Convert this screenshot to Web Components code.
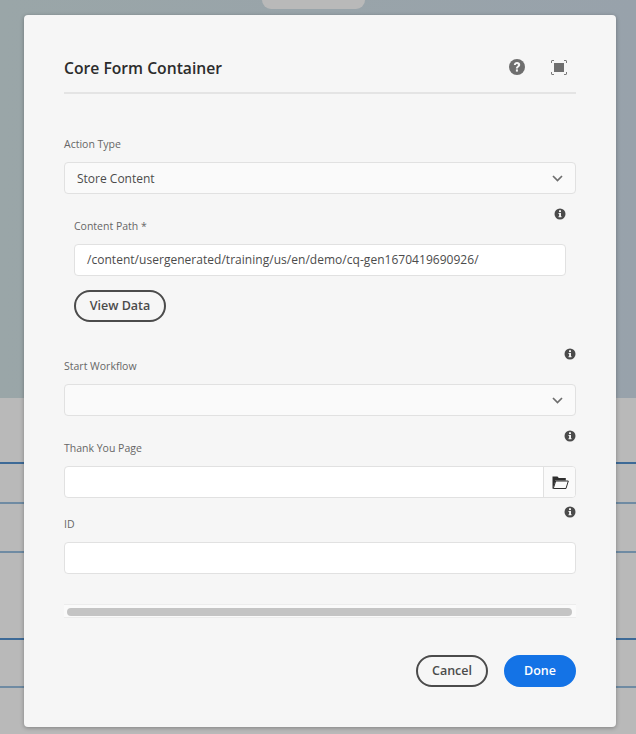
<!DOCTYPE html>
<html>
<head>
<meta charset="utf-8">
<title>Core Form Container</title>
<style>
html, body { margin: 0; padding: 0; }
body { width: 636px; height: 734px; overflow: hidden; font-family: "Open Sans", "Liberation Sans", sans-serif; }
</style>
</head>
<body>
<page-backdrop>
  <form-dialog heading="Core Form Container">
    <form-field label="Action Type">
      <select-box value="Store Content"></select-box>
    </form-field>
    <div style="padding:0 10px;margin-top:14px">
      <form-field label="Content Path *" info>
        <text-box value="/content/usergenerated/training/us/en/demo/cq-gen1670419690926/"></text-box>
      </form-field>
      <pill-button style="margin-top:14px;width:92px">View Data</pill-button>
    </div>
    <form-field label="Start Workflow" info style="margin-top:26px">
      <select-box></select-box>
    </form-field>
    <form-field label="Thank You Page" info style="margin-top:14px">
      <text-box browse></text-box>
    </form-field>
    <form-field label="ID" info style="margin-top:8px">
      <text-box></text-box>
    </form-field>
    <scroll-strip style="margin-top:30px"></scroll-strip>
    <pill-button slot="footer" style="width:72px">Cancel</pill-button>
    <pill-button slot="footer" primary style="width:72px">Done</pill-button>
  </form-dialog>
</page-backdrop>

<script>
class PageBackdrop extends HTMLElement {
    constructor() {
        super();
        this.attachShadow({mode: "open"});
    }
    connectedCallback() {
        this.shadowRoot.innerHTML = `
        <style>
        :host { display: flex; flex-direction: column; width: 636px; height: 734px; position: relative; overflow: hidden; background: #b9b9b9; }
        .top { height: 398px; background: linear-gradient(90deg, #9aa6a8, #98a2ab); flex: none; }
        .pill { width: 103px; height: 9px; margin-left: 262px; background: #b9b9b9; border-radius: 0 0 30px 30px; }
        .line { flex: none; height: 1.5px; }
        .dark { background: #3d6a97; }
        .soft { background: #6f8ba3; }
        </style>
        <div class="top"><div class="pill"></div></div>
        <div class="line dark" style="margin-top:64px"></div>
        <div class="line soft" style="margin-top:38.5px"></div>
        <div class="line soft" style="margin-top:47.5px"></div>
        <div class="line dark" style="margin-top:85.5px"></div>
        <div class="line soft" style="margin-top:46.5px"></div>
        <slot></slot>`;
    }
}

class FormDialog extends HTMLElement {
    constructor() {
        super();
        this.attachShadow({mode: "open"});
    }
    connectedCallback() {
        this.shadowRoot.innerHTML = `
        <style>
        :host { display: flex; flex-direction: column; box-sizing: border-box; position: absolute; left: 24px; top: 15px; width: 592px; height: 712px; padding: 40px; background: #f6f6f6; border-radius: 4px; box-shadow: 0 1px 4px rgba(0,0,0,.3); }
        header { display: flex; align-items: center; height: 37px; padding: 0 9px 0 0; border-bottom: 2px solid #e4e4e4; margin-bottom: 32px; flex: none; }
        h2 { flex: 1; margin: 0 0 11px; font-size: 15.7px; line-height: 26px; font-weight: 600; color: #2c2c2c; }
        svg { display: block; margin-bottom: 13px; }
        .help { margin-right: 26px; }
        footer { display: flex; justify-content: flex-end; gap: 16px; margin-top: auto; }
        </style>
        <header>
          <h2>${this.getAttribute("heading")}</h2>
          <svg class="help" width="16" height="16" viewBox="0 0 16 16"><circle cx="8" cy="8" r="8" fill="#6e6e6e"/><path d="M4.800 6C5 4.200 6.300 3.100 8.100 3.100c1.800 0 3.100 1.100 3.100 2.700 0 1.300-.8 1.900-1.500 2.400-.6.400-.8.700-.8 1.300H6.900c0-1.200.4-1.800 1.100-2.300.6-.4.900-.7.900-1.200 0-.6-.4-1-1-1-.7 0-1 .4-1.100 1.100z" fill="#f6f6f6"/><rect x="6.900" y="10.400" width="2" height="2.200" fill="#f6f6f6"/></svg>
          <svg width="16" height="15" viewBox="0 0 16 15" fill="none"><rect x="3" y="3" width="10" height="9" fill="#6e6e6e"/><path d="M.5 3V1a.5.5 0 0 1 .5-.5h2M13 .5h2a.5.5 0 0 1 .5.5v2M15.500 12v2a.5.5 0 0 1-.5.5h-2M3 14.500H1a.5.5 0 0 1-.5-.5v-2" stroke="#7a7a7a"/></svg>
        </header>
        <slot></slot>
        <footer><slot name="footer"></slot></footer>`;
    }
}

class FormField extends HTMLElement {
    constructor() {
        super();
        this.attachShadow({mode: "open"});
    }
    connectedCallback() {
        let info = "";
        if (this.hasAttribute("info")) {
            info = `<svg width="12" height="12" viewBox="0 0 12 12"><circle cx="6" cy="6" r="5.500" fill="#4b4b4b"/><rect x="5" y="2.300" width="2" height="1.800" fill="#f6f6f6"/><path d="M4.500 5h2.500v3.200h.6v1H4.500v-1h.6V6h-.6z" fill="#f6f6f6"/></svg>`;
        }
        this.shadowRoot.innerHTML = `
        <style>
        :host { display: block; }
        .head { display: grid; height: 28px; margin-bottom: 8px; }
        .head > * { grid-area: 1 / 1; }
        label { align-self: end; padding-bottom: 2px; font-size: 10.5px; line-height: 16px; color: #666; }
        svg { justify-self: end; display: block; }
        </style>
        <div class="head"><label>${this.getAttribute("label")}</label>${info}</div>
        <slot></slot>`;
    }
}

class SelectBox extends HTMLElement {
    constructor() {
        super();
        this.attachShadow({mode: "open"});
    }
    connectedCallback() {
        this.shadowRoot.innerHTML = `
        <style>
        :host { display: flex; align-items: center; box-sizing: border-box; height: 32px; padding: 0 12px; background: #fafafa; border: 1px solid #e1e1e1; border-radius: 4px; font-size: 12px; color: #4b4b4b; }
        span { flex: 1; }
        </style>
        <span>${this.getAttribute("value") || ""}</span>
        <svg width="11" height="7" viewBox="0 0 11 7" fill="none"><path d="M1 1l4.500 4.500L10 1" stroke="#6e6e6e" stroke-width="1.700"/></svg>`;
    }
}

class TextBox extends HTMLElement {
    constructor() {
        super();
        this.attachShadow({mode: "open"});
    }
    connectedCallback() {
        let browse = "";
        if (this.hasAttribute("browse")) {
            browse = `<div class="browse"><svg width="17" height="13" viewBox="0 0 17 13"><path d="M.5 12.500V.5h5l1.300 1.500h7V4.500H3.500L1 12.500z" fill="#2f2f2f"/><path d="M3.700 5h12.600l-2.300 7.500H1.300z" fill="none" stroke="#2f2f2f"/></svg></div>`;
        }
        this.shadowRoot.innerHTML = `
        <style>
        :host { display: flex; box-sizing: border-box; height: 32px; background: #fff; border: 1px solid #e1e1e1; border-radius: 4px; overflow: hidden; font-size: 12px; letter-spacing: .03px; color: #4b4b4b; }
        .value { flex: 1; padding: 0 12px; line-height: 29px; white-space: nowrap; }
        .browse { display: flex; align-items: center; justify-content: center; width: 32px; padding-left: 1px; box-sizing: border-box; background: #fafafa; border-left: 1px solid #e1e1e1; }
        </style>
        <div class="value">${this.getAttribute("value") || ""}</div>${browse}`;
    }
}

class PillButton extends HTMLElement {
    constructor() {
        super();
        this.attachShadow({mode: "open"});
    }
    connectedCallback() {
        this.shadowRoot.innerHTML = `
        <style>
        :host { display: flex; align-items: center; justify-content: center; box-sizing: border-box; height: 32px; padding-bottom: 2px; border: 2px solid #4b4b4b; border-radius: 16px; font-size: 12.5px; font-weight: 600; color: #4b4b4b; }
        :host([primary]) { background: #1473e6; border-color: #1473e6; color: #fff; }
        </style>
        <slot></slot>`;
    }
}

class ScrollStrip extends HTMLElement {
    constructor() {
        super();
        this.attachShadow({mode: "open"});
    }
    connectedCallback() {
        this.shadowRoot.innerHTML = `
        <style>
        :host { display: block; box-sizing: border-box; height: 14px; padding: 3px 4px 3px 3px; background: #fafafa; border: solid #ececec; border-width: 1px 0; }
        div { height: 8px; background: #c4c4c4; border-radius: 4px; }
        </style>
        <div></div>`;
    }
}

customElements.define("page-backdrop", PageBackdrop);
customElements.define("form-dialog", FormDialog);
customElements.define("form-field", FormField);
customElements.define("select-box", SelectBox);
customElements.define("text-box", TextBox);
customElements.define("pill-button", PillButton);
customElements.define("scroll-strip", ScrollStrip);
</script>
</body>
</html>
